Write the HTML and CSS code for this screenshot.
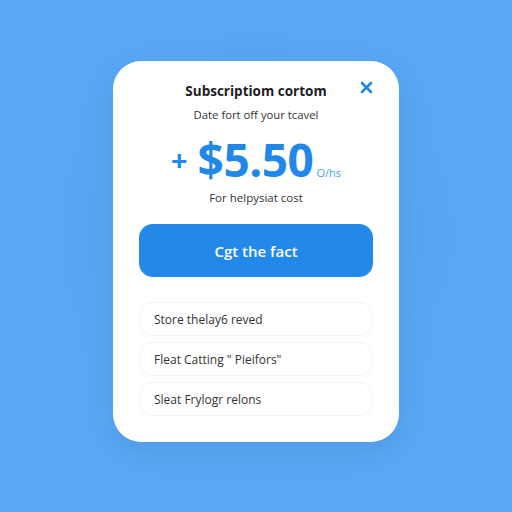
FILE: index.html
```html
<!DOCTYPE html>
<html lang="en">
<head>
  <meta charset="UTF-8" />
  <title>Subscription</title>
  <meta name="viewport" content="width=device-width, initial-scale=1">
  <link rel="stylesheet" href="styles.css">
</head>
<body>
  <div class="modal">
    <div class="modal-head">
      <h2>Subscriptiom cortom</h2>
      <button class="close" aria-label="Close">
        <svg width="13" height="13" viewBox="0 0 13 13">
          <path d="M2 2 L11 11 M11 2 L2 11" stroke="#1f86e6" stroke-width="2.6" stroke-linecap="round" />
        </svg>
      </button>
    </div>
    <p class="sub">Date fort off your tcavel</p>
    <div class="price">
      <span class="plus">+</span>
      <span class="amount">$5.50</span>
      <span class="per">O/hs</span>
    </div>
    <p class="note">For helpysiat cost</p>
    <button class="cta">Cgt the fact</button>
    <ul class="options">
      <li>Store thelay6 reved</li>
      <li>Fleat Catting " Pieifors"</li>
      <li>Sleat Frylogr relons</li>
    </ul>
  </div>
</body>
</html>
```

FILE: styles.css
```css
* {
  margin: 0;
  padding: 0;
  box-sizing: border-box;
}

body {
  font-family: 'Open Sans', 'Liberation Sans', sans-serif;
  background: radial-gradient(circle at 50% 45%, #56a3ee, #5aa9f4 70%);
  color: #333;
  height: 512px;
  display: flex;
  align-items: center;
  justify-content: center;
}

/* Modal card */
.modal {
  width: 286px;
  height: 381px;
  background: #fff;
  border-radius: 28px;
  padding: 20px 26px 26px;
  display: flex;
  flex-direction: column;
  align-items: center;
  box-shadow: 0 10px 30px rgba(30, 80, 150, 0.15);
  margin-top: -9px;
}

.modal-head {
  width: 100%;
  position: relative;
  text-align: center;
}

.modal-head h2 {
  font-size: 13.5px;
  font-weight: 700;
  color: #1d1d1f;
  line-height: 20px;
}

.close {
  position: absolute;
  right: 0;
  top: 0;
  background: none;
  border: none;
  cursor: pointer;
  display: flex;
}

.sub {
  font-size: 11.3px;
  margin-top: 6px;
  color: #333;
}

/* Price */
.price {
  display: flex;
  align-items: baseline;
  color: #2188e8;
  margin-top: 14px;
}

.amount {
  font-size: 46px;
  font-weight: 700;
  letter-spacing: -0.5px;
  line-height: 1;
}

.plus {
  align-self: center;
  font-size: 29px;
  font-weight: 700;
  line-height: 1;
  margin-right: 10px;
}

.per {
  font-size: 11px;
  margin-left: 3px;
  color: #4a9be8;
}

.note {
  font-size: 11.5px;
  color: #333;
  margin-top: 8px;
}

/* Call to action */
.cta {
  width: 100%;
  height: 54px;
  margin-top: 19px;
  background: #2289ea;
  color: #fff;
  border: none;
  border-radius: 14px;
  font-family: inherit;
  font-size: 15px;
  font-weight: 600;
  cursor: pointer;
}

/* Option rows */
.options {
  list-style: none;
  width: 100%;
  margin-top: 25px;
  display: flex;
  flex-direction: column;
  gap: 6px;
}

.options li {
  height: 34px;
  border: 1px solid #f3f4f6;
  border-radius: 14px;
  padding: 0 14px;
  display: flex;
  align-items: center;
  font-size: 12px;
  color: #333;
}
```
